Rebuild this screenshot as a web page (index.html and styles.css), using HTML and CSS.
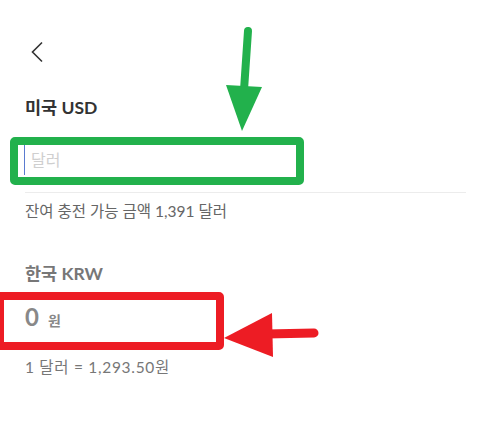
FILE: index.html
```html
<!DOCTYPE html>
<html lang="ko">
<head>
<meta charset="utf-8">
<link rel="stylesheet" href="styles.css">
</head>
<body>
<div class="screen">
  <div class="topbar">
    <svg class="back" width="14" height="22" viewBox="0 0 14 22"><path d="M12 1.5 L2.5 11 L12 20.5" fill="none" stroke="#333" stroke-width="1.6"/></svg>
  </div>
  <main class="content">
    <h2 class="label">미국 USD</h2>
    <div class="field">
      <span class="caret"></span>
      <span class="placeholder">달러</span>
    </div>
    <p class="hint">잔여 충전 가능 금액 1,391 달러</p>

    <h2 class="label label-muted">한국 KRW</h2>
    <div class="amount"><span class="amount-num">0</span><span class="amount-unit">원</span></div>
    <p class="rate">1 달러 = 1,293.50원</p>
  </main>

  <div class="mark mark-green"></div>
  <div class="mark mark-red"></div>
  <svg class="arrows" width="488" height="421" viewBox="0 0 488 421">
    <line x1="248" y1="31" x2="244" y2="90" stroke="#22b14c" stroke-width="8" stroke-linecap="round"/>
    <polygon points="226,85 262,87 242,131" fill="#22b14c"/>
    <line x1="314" y1="333" x2="266" y2="334" stroke="#ed1c24" stroke-width="9" stroke-linecap="round"/>
    <polygon points="272,313 273,357 224,338" fill="#ed1c24"/>
  </svg>
</div>
</body>
</html>
```
FILE: styles.css
```css
html, body {
  margin: 0;
  padding: 0;
  background: #fff;
}
body {
  font-family: Lato, "Noto Sans CJK KR", sans-serif;
  width: 488px;
  height: 421px;
  overflow: hidden;
}
.screen {
  position: relative;
  width: 488px;
  height: 421px;
}
.topbar {
  height: 96px;
  padding-left: 30px;
  padding-top: 41px;
  box-sizing: border-box;
}
.back {
  display: block;
}
.content {
  padding: 0 22px 0 25px;
}
.label {
  margin: 0;
  font-size: 17.5px;
  line-height: 24px;
  font-weight: 700;
  color: #333;
}
.label-muted {
  color: #777;
  margin-top: 40px;
}
.field {
  margin-top: 25px;
  height: 47px;
  border-bottom: 1px solid #ececec;
  display: flex;
  align-items: flex-start;
}
.caret {
  width: 1px;
  height: 30px;
  margin-left: -1px;
  background: #5a7bd0;
}
.placeholder {
  margin-left: 6px;
  font-size: 16px;
  line-height: 30px;
  color: #cfcfcf;
}
.hint {
  margin: 7px 0 0;
  font-size: 15.5px;
  line-height: 22px;
  color: #666;
}
.amount {
  margin-top: 15px;
  height: 32px;
  display: flex;
  align-items: baseline;
  color: #888;
  font-weight: 700;
}
.amount-num {
  font-size: 24px;
  line-height: 32px;
}
.amount-unit {
  font-size: 14px;
  margin-left: 9px;
}
.rate {
  margin: 23px 0 0;
  font-size: 15.5px;
  line-height: 22px;
  letter-spacing: 0.7px;
  color: #777;
}
.mark {
  position: absolute;
  box-sizing: border-box;
  border-style: solid;
  border-width: 8px;
  border-radius: 5px;
}
.mark-green {
  left: 10px;
  top: 137px;
  width: 294px;
  height: 48px;
  border-color: #22b14c;
}
.mark-red {
  left: -4px;
  top: 292px;
  width: 228px;
  height: 58px;
  border-color: #ed1c24;
}
.arrows {
  position: absolute;
  left: 0;
  top: 0;
}
```
